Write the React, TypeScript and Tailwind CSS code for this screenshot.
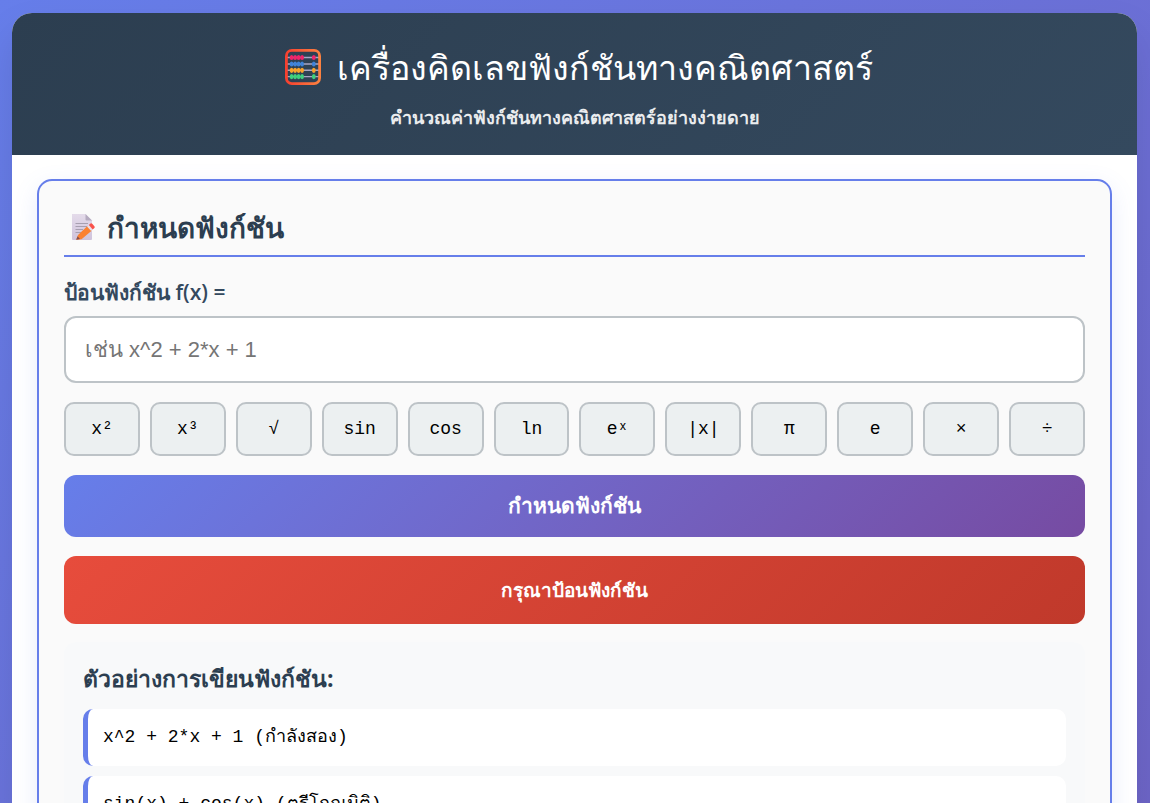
import { useState } from "react";

const symbols = [
  { label: "x²", value: "^2" },
  { label: "x³", value: "^3" },
  { label: "√", value: "sqrt(" },
  { label: "sin", value: "sin(" },
  { label: "cos", value: "cos(" },
  { label: "ln", value: "log(" },
  { label: "eˣ", value: "exp(" },
  { label: "|x|", value: "abs(" },
  { label: "π", value: "pi" },
  { label: "e", value: "e" },
  { label: "×", value: "*" },
  { label: "÷", value: "/" },
];

const examples = ["x^2 + 2*x + 1 (กำลังสอง)", "sin(x) + cos(x) (ตรีโกณมิติ)"];

const beadRows = [
  { y: 8.5, color: "#f0246a" },
  { y: 15, color: "#3f83d8" },
  { y: 21.3, color: "#f9a32b" },
  { y: 27.6, color: "#3fd07c" },
];

function Abacus() {
  return (
    <svg className="size-9 shrink-0" viewBox="0 0 36 36" aria-hidden="true">
      <defs>
        <linearGradient id="frame" x1="0" y1="0" x2="1" y2="0">
          <stop offset="0" stopColor="#f8402f" />
          <stop offset="1" stopColor="#fc8140" />
        </linearGradient>
      </defs>
      {beadRows.map((row) => (
        <g key={row.color}>
          <path d={`M2 ${row.y}H34`} stroke="#a9a6c4" strokeWidth="1.4" />
          {[6.6, 10.1, 13.6, 17.1, 28.8].map((x) => (
            <ellipse key={x} cx={x} cy={row.y} rx="1.9" ry="2.6" fill={row.color} />
          ))}
        </g>
      ))}
      <rect x="1.4" y="1.4" width="33.2" height="33.2" rx="5.5" fill="none" stroke="url(#frame)" strokeWidth="2.8" />
    </svg>
  );
}

function Memo() {
  return (
    <svg className="h-7 w-6 shrink-0" viewBox="0 0 24 28" aria-hidden="true">
      <defs>
        <linearGradient id="paper" x1="0" y1="0" x2="0" y2="1">
          <stop offset="0" stopColor="#e4dbea" />
          <stop offset="1" stopColor="#cfc3dc" />
        </linearGradient>
      </defs>
      <path d="M1 1H14.5L21 7.500V26Q21 27 20 27H2Q1 27 1 26Z" fill="url(#paper)" />
      <path d="M14.500 1V6.500Q14.500 7.500 15.500 7.500H21Z" fill="#b5abc0" />
      <path d="M4.500 10.500H17M4.500 13.500H17M4.500 16.500H12M4.500 19.500H10" stroke="#a79fb0" strokeWidth="1" />
      <path d="M5.200 26.700L7 22L16.700 12.800L20.900 17.400L10.500 26.300Z" fill="#fb8132" />
      <path d="M5.200 26.700L6.600 23.300L9 25.900Z" fill="#864f50" />
      <path d="M16 13.500L17.900 11.900L21.900 16.400L20.200 18Z" fill="#eadfe8" />
      <path d="M17.900 11.900L19.500 10.600Q20.400 10 21.200 10.800L23.600 13.500Q24 14.400 23.400 15.100L21.700 16.500Z" fill="#f9524b" />
    </svg>
  );
}

export default function App() {
  const [expression, setExpression] = useState("");

  return (
    <div className="min-h-screen bg-linear-135 from-[#667eea] to-[#6e64c6] pt-[13px] pr-[13px] pb-[13px] pl-3 font-['Open_Sans','Noto_Sans',sans-serif]">
      <div className="overflow-hidden rounded-[20px] bg-white shadow-[0_20px_40px_rgba(0,0,0,0.1)]">
        <header className="flex h-[142px] flex-col items-center bg-linear-135 from-[#2c3e50] to-[#34495e] pt-7 text-white">
          <h1 className="flex items-center gap-4 pl-2 text-[34px] leading-[52px] font-medium">
            <Abacus />
            เครื่องคิดเลขฟังก์ชันทางคณิตศาสตร์
          </h1>
          <p className="mt-3 text-[18px] leading-6 font-semibold opacity-90">
            คำนวณค่าฟังก์ชันทางคณิตศาสตร์อย่างง่ายดาย
          </p>
        </header>

        <main className="px-[25px] pt-6 pb-[25px]">
          <section className="rounded-[15px] border-2 border-[#667eea] bg-[#fafafa] px-[25px] pt-6 pb-[25px] shadow-[0_8px_25px_rgba(102,126,234,0.15)]">
            <h2 className="flex h-[52px] items-start gap-3 border-b-2 border-[#667eea] pt-2 pl-[7px] text-[28px] leading-7 font-bold text-[#2c3e50]">
              <Memo />
              กำหนดฟังก์ชัน
            </h2>

            <label htmlFor="fx" className="mt-5 block text-[21px] leading-[30px] font-semibold text-[#34495e]">
              ป้อนฟังก์ชัน f(x) =
            </label>
            <input
              id="fx"
              type="text"
              value={expression}
              onChange={(e) => setExpression(e.target.value)}
              placeholder="เช่น x^2 + 2*x + 1"
              className="mt-[9px] block h-[67px] w-full rounded-xl border-2 border-[#bdc3c7] bg-white px-[19px] font-['Liberation_Sans',sans-serif] text-[22px] placeholder:text-[#757575]"
            />

            {/* Symbol pad */}
            <div className="mt-[19px] grid grid-cols-12 gap-[10px]">
              {symbols.map((s) => (
                <button
                  key={s.label}
                  type="button"
                  onClick={() => setExpression(expression + s.value)}
                  className="h-[54px] rounded-[10px] border-2 border-[#bdc3c7] bg-[#ecf0f1] font-['Liberation_Mono',monospace] text-[18px] text-black"
                >
                  {s.label}
                </button>
              ))}
            </div>

            <button
              type="button"
              className="mt-[19px] h-[62px] w-full rounded-xl bg-linear-135 from-[#667eea] to-[#764ba2] text-[21px] font-bold text-white"
            >
              กำหนดฟังก์ชัน
            </button>

            <div
              role="alert"
              className="mt-[19px] flex h-[68px] items-center justify-center rounded-xl bg-linear-135 from-[#e74c3c] to-[#c0392b] text-[19px] font-semibold text-white"
            >
              กรุณาป้อนฟังก์ชัน
            </div>

            <div className="mt-[18px] rounded-xl bg-[#f8f9fa] px-[19px] pt-5 pb-[19px]">
              <h3 className="text-[23px] leading-8 font-bold text-[#2c3e50]">ตัวอย่างการเขียนฟังก์ชัน:</h3>
              <ul className="mt-[15px] flex flex-col gap-[10px]">
                {examples.map((text) => (
                  <li
                    key={text}
                    className="h-[57px] rounded-[10px] border-l-5 border-[#667eea] bg-white px-[15px] pt-[14px] font-['Liberation_Mono',monospace] text-[18px] leading-7 text-black"
                  >
                    {text}
                  </li>
                ))}
              </ul>
            </div>
          </section>
        </main>
      </div>
    </div>
  );
}
